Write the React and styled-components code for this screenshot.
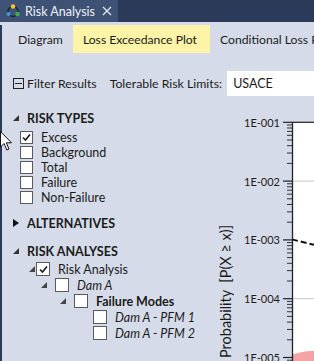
import React from 'react'
import styled, { createGlobalStyle } from 'styled-components'

const GlobalStyle = createGlobalStyle`
  html, body {
    margin: 0;
    padding: 0;
    background: #d6dbe9;
  }
  body {
    font-family: Lato, "Noto Sans", sans-serif;
    color: #1b1b1b;
  }
`

const TOP = 26.3
const DEC = 58.8
const decadeLabels = ['1E-001', '1E-002', '1E-003', '1E-004', '1E-005']

function Expanded({ color = '#333', size = 6 }) {
  return (
    <svg width={size} height={size} viewBox="0 0 6 6">
      <polygon points="6,0 6,6 0,6" fill={color} />
    </svg>
  )
}

function Collapsed() {
  return (
    <svg width="6" height="8" viewBox="0 0 6 8">
      <polygon points="0,0 6,4 0,8" fill="#111" />
    </svg>
  )
}

function Check({ checked, $size }) {
  return (
    <Box $size={$size}>
      {checked && (
        <svg width="11" height="11" viewBox="0 0 11 11">
          <path d="M2 5.5 L4.5 8 L9 2.5" stroke="#1a1a1a" strokeWidth="1.6" fill="none" />
        </svg>
      )}
    </Box>
  )
}

function TabIcon() {
  return (
    <svg width="16" height="16" viewBox="0 0 16 16">
      <circle cx="8" cy="8.5" r="5" stroke="#1d2330" strokeWidth="1.3" fill="none" />
      <circle cx="8" cy="3.5" r="2.3" fill="#f2c230" />
      <circle cx="3.6" cy="11" r="2" fill="#3d9be0" />
      <circle cx="12.4" cy="11" r="2.3" fill="#3fae49" />
    </svg>
  )
}

function Chart() {
  const minors = []
  for (let d = 0; d < 5; d++) {
    for (let k = 2; k <= 9; k++) {
      minors.push(TOP + (d + 1) * DEC - Math.log10(k) * DEC)
    }
  }
  return (
    <svg width="76" height="265" viewBox="0 0 76 265">
      <rect x="55" y={TOP} width="21" height="240" fill="#fff" />
      <line x1="55" y1={TOP + DEC} x2="76" y2={TOP + DEC} stroke="#c8c8c8" strokeWidth="1" />
      <line x1="55" y1={TOP + DEC * 3} x2="76" y2={TOP + DEC * 3} stroke="#c8c8c8" strokeWidth="1" />
      <path d={`M55 ${TOP + DEC * 3.95} Q66 ${TOP + DEC * 3.88} 76 ${TOP + DEC * 3.89} L76 265 L55 265 Z`} fill="#f6a3a7" />
      <line x1="54" y1={TOP + DEC * 2 - 0.5} x2="76" y2={TOP + DEC * 2 + 5} stroke="#111" strokeWidth="2" strokeDasharray="6 3" />
      <line x1="54" y1={TOP} x2="76" y2={TOP} stroke="#222" strokeWidth="1.2" />
      <line x1="54.5" y1={TOP} x2="54.5" y2="265" stroke="#222" strokeWidth="1.3" />
      {minors.map((y, i) => (
        <line key={i} x1="49" y1={y} x2="54" y2={y} stroke="#333" strokeWidth="1" />
      ))}
      {decadeLabels.map((t, i) => (
        <g key={t}>
          <line x1="45" y1={TOP + i * DEC} x2="54" y2={TOP + i * DEC} stroke="#222" strokeWidth="1.2" />
          <text
            x="42"
            y={TOP + i * DEC}
            textAnchor="end"
            dominantBaseline="central"
            fontFamily="Lato, 'Noto Sans', sans-serif"
            fontSize="11"
            fill="#1e1a16"
          >
            {t}
          </text>
        </g>
      ))}
    </svg>
  )
}

function Cursor() {
  return (
    <CursorWrap>
      <svg width="13" height="21" viewBox="0 0 13 21">
        <path d="M0.5 0.5 L0.5 16 L4 12.5 L6.8 19 L9 18 L6.3 11.8 L11.5 11.8 Z" fill="#fff" stroke="#111" strokeWidth="1" />
      </svg>
    </CursorWrap>
  )
}

const riskTypes = [
  { label: 'Excess', checked: true },
  { label: 'Background' },
  { label: 'Total' },
  { label: 'Failure' },
  { label: 'Non-Failure' },
]

const tree = [
  { label: 'Risk Analysis', level: 0, checked: true, caret: true, gap: 1 },
  { label: 'Dam A', level: 1, italic: true, caret: true, gap: 8 },
  { label: 'Failure Modes', level: 2, bold: true, caret: true, gap: 8 },
  { label: 'Dam A - PFM 1', level: 3, italic: true },
  { label: 'Dam A - PFM 2', level: 3, italic: true },
]

export default function App() {
  return (
    <Window>
      <GlobalStyle />
      <TitleBar>
        <DocTab>
          <TabIcon />
          <TabTitle>Risk Analysis</TabTitle>
          <svg width="10" height="10" viewBox="0 0 10 10">
            <path d="M1 1 L9 9 M9 1 L1 9" stroke="#e6eaf2" strokeWidth="1.2" />
          </svg>
        </DocTab>
      </TitleBar>
      <Content>
        <SubTabs>
          <SubTab>Diagram</SubTab>
          <SubTab $active>Loss Exceedance Plot</SubTab>
          <SubTab>Conditional Loss Plot</SubTab>
        </SubTabs>
        <FilterBar>
          <FilterIcon />
          <FilterLabel>Filter Results</FilterLabel>
          <LimitsLabel>Tolerable Risk Limits:</LimitsLabel>
          <LimitsInput>USACE</LimitsInput>
        </FilterBar>
        <Body>
          <Sidebar>
            <SectionHeader>
              <GlyphSlot><Expanded /></GlyphSlot>
              RISK TYPES
            </SectionHeader>
            <CheckList>
              {riskTypes.map((r) => (
                <CheckRow key={r.label}>
                  <Check checked={r.checked} />
                  <ItemLabel>{r.label}</ItemLabel>
                </CheckRow>
              ))}
            </CheckList>
            <SectionHeader $spaced>
              <GlyphSlot><Collapsed /></GlyphSlot>
              ALTERNATIVES
            </SectionHeader>
            <SectionHeader $spaced>
              <GlyphSlot><Expanded /></GlyphSlot>
              RISK ANALYSES
            </SectionHeader>
            {tree.map((t) => (
              <TreeRow key={t.label} $level={t.level}>
                <CaretSlot $gap={t.gap}>
                  {t.caret && <Expanded color="#444" size={6} />}
                </CaretSlot>
                <Check checked={t.checked} $size={14} />
                <ItemLabel $italic={t.italic} $bold={t.bold}>{t.label}</ItemLabel>
              </TreeRow>
            ))}
          </Sidebar>
          <ChartArea>
            <AxisTitle>Probability&nbsp;&nbsp;[P(X ≥ x)]</AxisTitle>
            <Chart />
          </ChartArea>
        </Body>
        <Cursor />
      </Content>
    </Window>
  )
}

const Window = styled.div`
  position: relative;
  width: 314px;
  height: 361px;
  overflow: hidden;
  background: #d6dbe9;
`
const TitleBar = styled.div`
  height: 22px;
  background: #2b3a58;
  display: flex;
`
const DocTab = styled.div`
  width: 118px;
  height: 22px;
  background: #3e5275;
  display: flex;
  align-items: center;
  box-sizing: border-box;
  padding-left: 5px;
  gap: 4px;
`
const TabTitle = styled.span`
  color: #eef1f7;
  font-size: 12.5px;
  margin-right: 3px;
`
const Content = styled.div`
  position: relative;
  height: 339px;
  border-left: 2px solid #2b3a58;
  background: #d6dbe9;
`
const SubTabs = styled.div`
  display: flex;
  height: 28px;
  margin-top: 3px;
  padding-left: 6px;
  white-space: nowrap;
`
const SubTab = styled.div`
  display: flex;
  align-items: center;
  padding: 0 10px;
  padding-right: ${(p) => (p.$active ? '13px' : '10px')};
  font-size: 12.2px;
  background: ${(p) => (p.$active ? '#fdf4a8' : 'transparent')};
`
const FilterBar = styled.div`
  display: flex;
  align-items: center;
  height: 26px;
  margin-top: 17px;
  padding-left: 11px;
  white-space: nowrap;
  font-size: 12.3px;
`
const FilterIcon = styled.span`
  position: relative;
  width: 9px;
  height: 9px;
  border: 1px solid #222;
  margin-right: 3px;
  &::after {
    content: '';
    position: absolute;
    left: 1px;
    right: 1px;
    top: 4px;
    height: 1px;
    background: #222;
  }
`
const FilterLabel = styled.span`
  margin-right: 13px;
`
const LimitsLabel = styled.span`
  margin-right: 5px;
`
const LimitsInput = styled.div`
  flex: 1;
  height: 25px;
  background: #fff;
  box-sizing: border-box;
  padding-left: 6px;
  display: flex;
  align-items: center;
  font-size: 12.5px;
`
const Body = styled.div`
  display: grid;
  grid-template-columns: 212px 1fr;
  height: 265px;
`
const Sidebar = styled.div`
  padding: 12px 0 0 11px;
  font-size: 12.5px;
  white-space: nowrap;
`
const SectionHeader = styled.div`
  display: flex;
  align-items: center;
  height: 20px;
  margin-top: ${(p) => (p.$spaced ? '8px' : '0')};
  font-weight: 700;
  font-size: 12.5px;
`
const GlyphSlot = styled.span`
  display: flex;
  align-items: center;
  width: 14px;
`
const CheckList = styled.div`
  margin-top: 2px;
  padding-left: 7px;
`
const CheckRow = styled.div`
  display: flex;
  align-items: center;
  height: 15px;
`
const Box = styled.span`
  display: flex;
  align-items: center;
  justify-content: center;
  width: ${(p) => p.$size || 13}px;
  height: ${(p) => p.$size || 13}px;
  box-sizing: border-box;
  border: 1px solid #5a5a5a;
  background: #fff;
  flex: none;
`
const ItemLabel = styled.span`
  margin-left: 8px;
  font-style: ${(p) => (p.$italic ? 'italic' : 'normal')};
  font-weight: ${(p) => (p.$bold ? 700 : 400)};
`
const TreeRow = styled.div`
  display: flex;
  align-items: center;
  height: 16px;
  padding-left: ${(p) => 9 + p.$level * 19}px;
`
const CaretSlot = styled.span`
  display: flex;
  justify-content: flex-end;
  align-items: center;
  width: 14px;
  box-sizing: border-box;
  padding-right: ${(p) => p.$gap || 0}px;
`
const ChartArea = styled.div`
  display: flex;
  overflow: hidden;
`
const AxisTitle = styled.div`
  width: 24px;
  writing-mode: vertical-rl;
  transform: rotate(180deg);
  padding-top: 3px;
  box-sizing: border-box;
  font-size: 14.5px;
  line-height: 24px;
  white-space: nowrap;
  color: #1b1b1b;
`
const CursorWrap = styled.div`
  position: absolute;
  left: -2px;
  top: 106px;
`
